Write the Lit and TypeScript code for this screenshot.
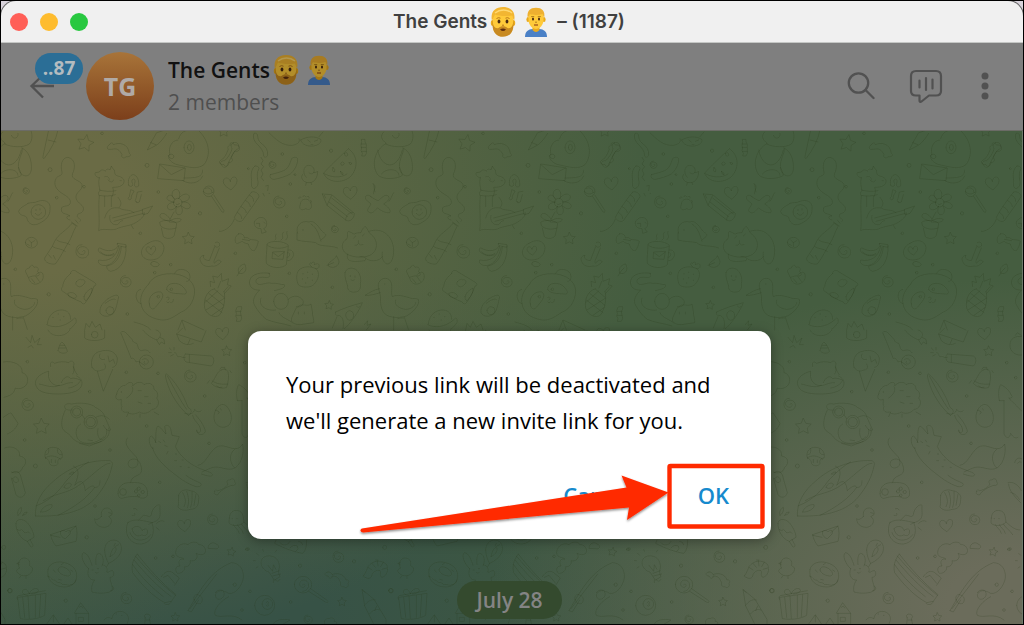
import { LitElement, html, svg, css } from "lit";
import { customElement } from "lit/decorators.js";

/* ---------- small doodles reused across the wallpaper ---------- */

const star = (x: number, y: number, r: number, turn = 0) => {
  const pts: string[] = [];
  for (let i = 0; i < 10; i++) {
    const a = (Math.PI / 5) * i - Math.PI / 2 + turn;
    const d = i % 2 ? r * 0.5 : r;
    pts.push(`${(x + d * Math.cos(a)).toFixed(1)} ${(y + d * Math.sin(a)).toFixed(1)}`);
  }
  return `M${pts.join("L")}Z`;
};

const dot = (x: number, y: number, r = 4) =>
  `M${x - r} ${y}a${r} ${r} 0 1 0 ${2 * r} 0a${r} ${r} 0 1 0 ${-2 * r} 0`;

const oval = (x: number, y: number, rx: number, ry: number, turn = 0) => {
  const a = (turn * Math.PI) / 180;
  const dx = rx * Math.cos(a);
  const dy = rx * Math.sin(a);
  return `M${x - dx} ${y - dy}A${rx} ${ry} ${turn} 1 1 ${x + dx} ${y + dy}A${rx} ${ry} ${turn} 1 1 ${x - dx} ${y - dy}`;
};

const spiral = (x: number, y: number, r: number) =>
  `M${x} ${y}c${r * 0.3} ${-r * 0.5} ${r * 0.6} ${r * 0.3} 0 ${r * 0.5}c${-r} 0 ${-r} ${-r * 1.2} 0 ${-r * 1.2}c${r * 1.2} 0 ${r * 1.2} ${r * 1.7} 0 ${r * 1.7}c${-r * 0.6} 0 ${-r} ${-r * 0.4} ${-r} ${-r}q0 ${-r} ${r * 0.9} ${-r}`;

const heart = (x: number, y: number, r: number) =>
  `M${x} ${y - r * 0.4}c${-r * 0.3} ${-r * 0.9} ${-r * 1.3} ${-r * 0.5} ${-r} ${r * 0.3}c${r * 0.2} ${r * 0.5} ${r * 0.7} ${r * 0.7} ${r * 1.1} ${r}c${r * 0.4} ${-r * 0.5} ${r * 0.9} ${-r * 0.8} ${r * 0.9} ${-r * 1.4}c0 ${-r * 0.8} ${-r * 0.9} ${-r * 0.7} ${-r} ${r * 0.1}`;

const upper: string[] = [
  // bone, ribbon, vine
  "M34 45c-6-8 10-10 12 0c14-2 20 6 10 12c-10 4-14 14-20 26c8 4 4 16-6 14c0 12-12 16-16 6c-12 2-18-8-6-14c8-4 16-20 20-32c-4-4 0-12 6-12",
  "M104 12c-8 30 30 34 30 66c2 6 10 4 12-2c2-36-30-30-30-58c0-8-10-12-12-6M108 108c-14 10-12 30-10 44c0 8-4 18 6 24c10-2 16-14 12-26c-2-14-2-24 4-34c0-6-6-8-12-8M126 82l6 10l-6 10l8 8l-8 10l6 12l-6 10l8 10",
  "M154 134c16-4 30-8 40-12c14-6 18-20 24-36c4-6 18-6 18 2c0 18-12 36-22 44c-14 8-36 14-48 16c-10 0-16-6-12-14M140 168l8-2l-2 16M132 190l4 8M150 190h2",
  // sleeping creature at the top edge
  "M150 8c20 20 40 40 70 38c18-4 24-10 20-20M245 30c20-12 44-12 60-2c4 8-6 18-22 20c-18 2-34-4-38-18M266 30l8 6M286 34l10-4M276 44h6M300 20l12-14",
  // chick
  "M262 142c-12-10-10-34 6-36c16 0 20 14 16 22c6 0 12-4 12-4c0 16-8 34-26 34c-20 0-28-18-18-26M262 158l-2 8M276 158l2 6M270 128c6 6 12 4 14 0",
  // watermelon
  "M388 56c30 20 30 60 6 84c-24 22-70 18-80-10c0-4 74-74 74-74M314 130c20 12 50 16 70 2M376 70q12-6 10 6q-8 8-10-6M366 98q6-6 10 2q-2 8-8 6ZM342 112q-4 14 4 14q6-6-4-14M364 124q2 12 8 10q4-4-8-10M390 98q8-4 8 4q-6 6-8-4",
  // wrapped candy
  "M428 28h10v8l4 6v28l-4 8h-10l2-8l-4-8l2-8l-2-8l2-10ZM426 42h14M426 52h14M428 64h14",
  // dinosaur
  "M494 6c-12 12-6 24 8 34c-36 20-46 66-26 94c14 18 64 12 74 2c-4-16-8-24-8-24M500 42c20 10 56 12 74 0c12-14 8-34 4-42M540 10c4 16-16 20-20 6M552 54c20 10 30 34 28 66c-4 24-26 22-36 4c-8-20 2-40 8-58c2-6 0-12 0-12M476 60c12 60 60 60 74 0M488 132c4-14 50-22 52 4",
  // carrot knife
  "M632 0l-16 74q-4 12 2 12q32-40 42-86M630 30l24 6",
  // arch bone, rocket
  "M816 42c-12 8-10 18 0 16c14 0 24-8 36 16c-4 8 6 14 12 6c10 2 18-4 10-10c-4-30-30-34-48-26c0-6-8-8-10-2",
  "M940 36l16-28l26-8M986 10c-8 14-20 28-28 34l-30 16l12-24M938 38l16 6",
  // dog and letter
  "M1020 30c-20 0-30 26-24 42c-10 10 0 20 8 26c10 8 30 8 40 12M1022 26c6-20 20-26 36-26M1084 4c30 30 36 70 14 100c-20 14-40 8-52 6M1038 52a14 18 0 1 0 30 0a14 18 0 1 0-30 0M1048 52a6 9 0 1 0 12 0a6 9 0 1 0-12 0M992 76q10-8 16 2q-2 12-12 6ZM966 102l76 12l-4 38l-78-6ZM966 104l34 30l40-20M1094 120c0 20-14 24-56 24M1034 152c20 12 50 10 60-14",
  // bone on the right
  "M1186 38c-10 6-6 14-4 16c0 12-16 34-22 38c-12 0-16 8-8 14c2 8 14 8 16-2c10-18 14-28 22-40c12 2 18-6 12-14c2-10-10-16-16-12",
  // paw
  "M244 222c2-14 12-16 20-14c10 2 16 18 12 26c-6 8-14 2-16 2c-10 6-18 4-18-4ZM240 206q-4-8 6-4M252 200q2-8 8 0M264 200q8-4 6 4M274 212q8 0 2 6",
  // fire cracker
  "M98 186c-12 14-40 52-52 76c4 10 16 16 24 10c14-20 38-52 50-72c0-10-14-18-22-14M92 196c8 2 12 10 12 18M80 212c8 4 14 10 14 18M66 230c8 4 16 10 16 18M56 248c8 4 12 10 12 18M46 268c-10 26-36 40-50 36M-4 298c-20-6-20-26-8-22c14 4 8 24 12 26",
  // fish, bow tie
  "M106 276c6-16 30-20 36-2c4 12-2 20-8 22l8 10l-14 4l-2-14c-16 0-22-10-20-20M112 280h10v10M134 276l4 4",
  "M58 312c-8 6-12 14-8 26c4 6 14-2 20-4c6 6 12 6 18 8c2 8 8 22 18 20c6-8 10-16 12-28c-6-6-20-4-26-6c-4-6-10-6-16-4c0-8-8-16-18-12ZM70 328l22 4",
  // pencil
  "M310 192l14 34l56 44c12 8 26-4 26-20l-68-56l-28-2ZM324 226l14-30M330 216l56 44M338 204l62 48M380 270c0-14 10-24 22-22M316 196l4 8",
  // banana peel
  "M456 200c-10-10-20-2-16 8l16 14c-8 14-16 20-4 26c12 4 16-10 24-14c10 8 24 16 36 14c6-8-8-20-18-26c14-10 20-14 14-24c-10-8-22 8-30 14c-8-2-14-6-22-12ZM466 164c8 10-6 20-2 28M462 160c6 10 2 18 6 26M524 188c-6 8-8 20-14 26",
  // fried egg
  "M570 220c-16 12-22 10-28 24c4 16 18 10 24 18c4 24 24 26 38 18c20-10 32-22 32-42c4-26-20-30-36-24c-12 6-20 2-30 6" + dot(601, 246, 22) + "M592 250c4 8 14 8 18-2M594 238v4M606 236v4",
  // whale
  "M236 310c-8-22 10-40 34-34c14-6 24 8 36 24c6 10 20 10 12 20l-12 10M234 308v22c20 6 40 4 56 8c14 14 40 6 66 16M276 282c20 12 24 36 30 52M250 300h4",
  // mug
  "M144 344c0 20-4 40-2 56c14 16 48 16 60 4l6-56M144 342c10-12 52-10 64 4c-6 12-56 12-64-2M208 360c22-4 20 32-2 32M206 368c10 0 8 14-2 14M162 366l34-2l-4 24l-32-2ZM162 368l16 12l18-14M168 330c8-8-4-10 4-18M186 330c14-8-4-14 8-24M200 330c12-12 0-14 4-26",
  // leaves
  "M76 402c-16 4-22 16-16 28c16 4 24-10 20-20ZM54 438l10-16l8-8M352 378c-4 12-28 18-24 30c14 10 34 0 32-14ZM324 406l20-8",
  // strawberry
  "M240 420c12-12 34-12 50-4c16 12 6 36-4 46c-8 12-40 12-48 2c-6-12-8-34 2-44M278 410c-12-8-4-14 0-10c4-8 12-2 8 4c8-4 16-4 14 4c2 6-4 8-10 8M252 430v2M266 426v2M280 432v2M250 446v2M266 442v2M280 450v2M260 458v2",
  // coiled snake and cat
  "M152 430c-22-4-56 0-60 22c-4 20 14 30 30 28c-12 12-26 30-14 48c8 14 20 30 34 40c20 10 52 12 74 20M150 430c6 8 2 14-14 12c-14-2-30 4-24 16c8 14 30-4 46 2c16-2 24 4 38 4c4 10-12 14-30 18M164 514a22 24 0 1 0 44 0a22 24 0 1 0-44 0M208 508c16-16 36-10 44 4c4 10-6 22-20 18M232 534l10-8c16-4 24 4 34-4l4 22c0 16 6 26 4 34l-40 6c-20 0-30-8-26-20ZM238 546v6M256 546v6M180 548c6 16 30 20 40 30M126 504c-10 26 20 40 44 36",
  // sleeping cat
  "M382 328c8-8 0-20 6-24c8 2 14 8 18 8c8-4 14-4 20-4c2-8 8-18 14-18c6 8 8 14 12 20c30 20 24 56 0 66c-20 10-62 6-76-10c-10-14-8-30 6-38M450 304c40-14 72 14 74 56c0 22-6 42-20 42c-14-6-16-22-14-36M386 372c-8 26 20 24 52 20c6-10-6-14-16-12M440 384c8 12 42 12 50-4M410 318l-6 6M430 318l6-6M408 346q8 2 10-6q6 8 14 4M418 338v-6",
  // ball, acorn
  oval(580, 338, 18, 16) + "M572 330l8 8l10-6M580 338v12M566 342l8 4",
  "M564 428c-6-10 4-12 10-14c4-10 10-12 14-2c12-4 16 6 10 12c10 10 6 14-4 14c-8-2-14 2-22 4ZM572 444c4 14 12 20 24 18c14-4 24-14 18-32c-8-8-14 0-20 4M580 446l10 12M594 440l10 14",
  // champagne bottle with splash
  "M702 280c-16 22-42 32-52 54c-8 20-22 36-30 50c-2 14 20 20 32 18c16-20 26-44 38-62c12-18 14-34 24-50ZM700 276l18 12M712 270l8 10M656 330c10 10 26 4 40 14M644 350c12 8 24 4 38 14M632 374l8 10M646 376l6 12M696 270c-16-4-10-14 0-12c-14-10-26-4-26-20c0-14 20-6 26-16c6-16-12-24-24-32c-20-12-26-30-18-44c6-12 20-6 18-20c-6-20 0-44 18-44c26 6 20 36 14 48c-8 20 24 20 28 34c2 20-20 20-18 40c4 18 26 20 22 36c-4 14-20 6-18 20c4 8 14 6 8 14",
  // alpaca playing guitar
  "M784 142c-4 18 0 28 2 40c-6 4-6 12-2 16c-4 30 2 76-2 104c14-10 40 4 60-8c22-8 40-6 60-22c14-10 20-22 18-24M784 144c-8-2-16-10-12-16l12-2c6-10 14-6 18-2c2-8 10-8 14-4l4-12l6 10c6 0 2 10 6 16c6 6 20 4 26 16c2 16-12 22-34 22c4 10 2 20-2 28M784 180c14 4 34 6 50 2M784 196c14 4 34 2 48-2M800 198v32M820 200v30M800 140c6-4 14 2 14 8M810 150c10 10 16 6 16 0M846 152h4M840 202c10 12 12 20 4 30M800 264c10-32 26-32 44-30c14 10 30 2 44 14M824 264l90-24M828 274l88-24M914 238l30-10l-14 22l-14 4ZM816 256c-4 14 4 30 20 28c10-2 6-10 18-12M880 286l6 10",
  // notes
  "M872 166c-4-18 4-32 14-32c12 2 18 18 16 34c-6 6-16 2-12-8c4-8-2-18-8-10c-2 10 6 14 0 18q-6 4-10-2M878 180l-4 20q-8 4 0 10q8 0 6-12l8-14ZM896 218q-8-6-2-12l4-20l14-2M910 194l-6 22q-8 6-10-2",
  // flower pot
  oval(1019, 218, 13, 13) + "M1010 208c-14-12-8-30 6-30c10 4 12 16 6 28c10-16 30-18 32-6c2 12-18 16-24 16c20-2 30 8 26 16c-8 10-20 0-28-6c10 16 4 30-8 28c-10-4-6-20-4-26c-10 16-28 14-28 2c2-12 16-12 22-14c-20-2-28-10-20-18c8-8 18 4 20 10M1014 222c4 4 8 2 10-2M1008 246l-12 22M996 268c-8-16-26-24-30-12c-2 8 12 14 28 18c12-10 34-12 36-4c-8 10-22 6-36 6M966 276c12-8 40-6 50 4l-2 14c-16 6-36 4-46-6ZM970 294l6 26c10 8 26 6 32-2l6-24",
  // lollipop
  oval(1112, 184, 16, 16) + "M1102 176c12-8 20 4 20 12M1098 186c10 10 20 6 28 0M1120 198l32 48q6 4 6-4l-30-46",
  // bananas
  "M840 348c-6 14-30 20-54 6c-6-2-8 10 0 14c16 12 30 10 42 6M842 348c-6 34-30 48-60 42c-4 8 4 14 12 16c20 4 44-12 52-54M850 350c-2 34-20 54-44 58c0 8 4 14 12 16c30-4 48-34 46-76M838 340l26 4v8l-20-4c-4 0-8-4-6-8M788 366c12 12 28 12 40 4",
  // thought bubble
  "M930 340c20-14 44-10 48 12c0 20-14 38-40 38c-16 0-28-10-28-24c2-12 8-20 20-26M938 402q0-8 10-8q12 2 16 10q-4 8-16 6q-10-4-10-8" + heart(939, 363, 14),
  // anchor
  "M1132 338c8-6 16 2 12 10c-4 6-14 4-14-2M1130 350l-16 42c-16-2-20-8-16-16c-12 2-14 10-10 18c4 14 20 18 34 14c12 4 24-10 28-12c-4-8-14-8-20 4c-4-4-2-8 0-12l14-34",
  // cheese cube
  "M698 430c-2-8 12-12 16-6c16 10 38 22 50 30c10 4 14 14 4 14c-6 20-16 36-26 50c-4 6-10 4-12-2c-18-6-38-18-52-30c-8-2-10-10-4-16c2-20 14-30 24-40M716 454c10-8 12-8 14-4c6-4 16 4 8 12c-6 8-14 10-16 8c-8-4-12-10-6-16M690 490c12-6 24 0 26 10c-4 8-14 4-22 0ZM738 500c4-16 18-22 24-26c2 14-8 28-18 38q-8-2-6-12",
  // avocado
  "M810 506c14-8 28-16 32-6c-4 20-8 36-12 44c-10 18-36 20-44 4c-2-20 10-30 24-42M802 520c10-8 24-16 30-12M804 542a12 12 0 1 0 24 0a12 12 0 1 0-24 0",
  // panda
  "M932 462c10-24 46-34 80-30c30 4 54 20 58 48c0 40-24 60-40 66c-20 12-36 26-60 24c-40-6-60-26-62-56c0-18 6-32 24-52M1010 430c6-20 44-14 46 8c0 12-4 16-10 16M908 478c-20 2-18 40 2 44M934 522c-6-22 16-40 34-36c18 10-6 34-16 46c-10 12-18 0-18-10M986 478c-2-22 36-24 50-6c14 14 10 22 0 20c-20-2-44 0-50-14M986 502q6-4 8 2l-4 6M986 516q4 6 8 0M998 518q8 2 8-10" + dot(961, 500, 4) + dot(1000, 478, 4),
  // pineapple
  "M1130 476c-26 6-34 36-30 58c8 24 30 30 44 22c14-20 20-50 14-72M1118 470l-2-16l14 4l-6-20l16 4l10-12l2 24l20-8l-4 18l12 4l-20 22M1140 474l8-20M1158 484l12-14M1102 510l50 38M1112 490l46 36M1130 478l28 24M1104 540l56-36M1100 518l40-36M1122 556l34-24",
  "M58 530h10v8l-4 6l4 22l-4 8h-12l2-8l-4-8l2-8l-2-8l4-10ZM52 544h14M52 556h14",
  // pizza slice
  "M350 546c20-10 50-20 80-28c-6 20-40 70-54 78M350 546q-4 10 6 10c16 0 20 20 16 40M392 542c-14 2-16 18-4 28c12 4 20-10 14-22ZM412 528q8 8 10 2M354 560l-14 34",
  // goose
  "M478 472c-4-24 20-34 34-22c12 14 2 36 8 50c14-8 34-2 60 6c8-2 12 0 18 2c6 16-16 40-36 50c-24 8-60 6-70-14c-12-22-4-40-10-56ZM482 476c-16 2-30 12-44 20c10 2 34-4 46-8M530 510c-6 14 10 26 30 28c20 0 30-14 30-20M496 462h2M524 560v40M556 562l12 36M536 566c6-2 12-2 18-2",
  // burger
  "M628 582c2-28 24-44 46-42c16 2 24 12 24 28M626 584c20 10 50 10 80-16c6-10 10 0 8 10c-8 10-12 16-20 20M644 562h2M660 552h2M676 560h2M666 570h2",
  "M740 600l4-20l10 12l8-18l10 18l14-10l6 18M888 576c20 6 40 10 50 24M1020 600l12-30l66 30M1032 572l10 28M436 584l10-12l-2 14l12-4l-14 18",
  // ghost
  "M378 428c-2 14 4 26 8 40c-2 14 10 20 22 18c14 0 18-12 16-26c4-14-2-34-14-42c-14-8-30-2-32 10M394 436v4M408 438v4M396 450q6 4 10 0",
  star(742, 40, 26, 0.2), star(14, 4, 18), star(1051, 326, 19), star(330, 526, 14, 0.1),
  heart(34, 162, 20), heart(394, 190, 20),
  spiral(161, 104, 11), spiral(182, 216, 18), spiral(348, 297, 11), spiral(565, 182, 10), spiral(734, 364, 20), spiral(864, 454, 17),
  dot(190, 72), dot(214, 162), dot(203, 259), dot(49, 370), dot(211, 430), dot(340, 472), dot(532, 418), dot(636, 119, 6),
  dot(656, 203), dot(738, 170), dot(927, 106, 6), dot(961, 186), dot(1086, 250, 5), dot(907, 310), dot(998, 404), dot(950, 428),
  dot(868, 552), dot(632, 493, 5), dot(336, 62, 5), dot(88, 116, 3), dot(228, 134, 3), dot(792, 10, 4),
];

const lower: string[] = [
  // top row: grass, camera, comet, carrot, gift box
  "M54 22l14 16l4-22l8 22l16-14l-8 20l12 0M60 52l10-6l6 8M120 0c10 22 50 24 66 0M230 2v22c10 10 46 10 60 0v-24" + dot(260, 14, 10),
  "M410 106c-16-10-18-14-26-10c-4-10-10-14-14-10c-8-20-24-60-32-78c10-12 20 6 34 20c2 8 6 10 14 12c6 10 2 18 14 22c12-4 20-2 26 6M394 96a21 21 0 1 0 42 0a21 21 0 1 0-42 0M404 88c10-6 20 2 16 10c-6 10-18 0-10-4",
  "M404 0c12 14 28 26 44 30l8-10c4-10-2-18-12-20M446 30l8 14l6-8l10 6l-2-14l-12-6M508 10l16-16M506 12l8 20c16 14 30 14 42 8M506 12l74 24l14-34M540 42l6-14",
  "M756 20c-20-4-36 6-36 24c-2 22 20 36 40 30M736 16l6-8l12 8",
  // candy corn
  "M150 62c4-16 8-24 12-26c8 6 14 18 16 28c-4 8-22 8-28-2M152 54h22M156 46h14",
  // hamster in a ring
  "M128 110c-4-14 4-18 12-10c14-6 30-6 42-2c6-8 16-6 16 4c-4 12 4 24 10 32M122 124c-20 4-40 18-40 36c4 26 30 32 70 32c40 0 70-10 70-32c0-14-10-18-16-22M122 126c-4 20 6 36 22 40c20 4 30-10 50-8M160 158c6-16 20-24 28-12c8-4 18 0 30 4c-4 12-20 22-36 24M94 162c20 4 40 14 60 4M196 110c4 8 2 16-2 22",
  // ice cream
  "M252 112c-6-20 4-46 26-48c16-6 42-4 50 20c0 20-6 26-14 28M252 112c10 14 20 12 30 8c14 0 12-16 6-20M268 124l18 60l28-66M276 72c-6 10 2 20 14 16M300 78l4 18l12-8l4 12",
  // dynamite
  "M532 72l78 6c10 4 10 22 0 30l-76-12c-8-6-8-20-2-24M544 74v22M532 82c-12 4-12-6-20-2c-8 2-2-12-12-12M490 60l-6-6M490 68h-8M498 60v-8M496 74l-8 4",
  // bell
  "M640 120c-14 4-14 20-30 40c10 12 34 18 46 12c4-16 8-30 4-46c-2-8-14-12-20-6M612 152c12 10 30 12 48 10M636 118l4-6h10l2 8M604 152l-6 8M666 122l4 6M626 168q10 8 16 4",
  // sheep
  "M326 192c2-14 14-26 26-26c12-14 26-10 22 2c10-14 30-14 34-4c12-8 30-4 30 14c12 8 14 18 8 26c12 14 2 34-14 34c-10 14-30 14-38 8c-14 8-28 8-36 0c-16 4-20-10-16-16c-4-4-2-12-2-22c-12 6-22-4-14-16M372 170c8 8-2 26-16 34M340 184v4M362 246l-6 14M438 246l14 8M396 252v10M390 182h10M410 200h10M390 216l12 4M420 220h8",
  // umbrella
  "M474 132l-2 6c8 40 30 80 60 110l10 8M476 132c24 20 50 60 64 100l8 6c4 8 0 14-6 18M478 138c20 36 40 76 58 100M530 250c16 6 28 0 30-12c6 10 18 8 20 4M554 256c4 20 20 22 24 44c0 10-12 10-12 2M562 254c10 10 28 34 30 50c-4 14-26 14-26-4",
  // goggles dog
  "M190 222c-16-4-24 4-18 14c10 8 20 2 24 4M172 240c-10 20-14 44-8 56c4 10 16 12 24 22c20 30 70 30 100 12c14-10 18-20 14-36M192 222c20-6 60-2 70 10c20 10 26 20 28 28l18 40c-6 8-16-4-22-14" + dot(206, 246, 18) + dot(206, 246, 12) + dot(248, 276, 20) + dot(248, 276, 14) + "M222 254l8 12M264 262c16-10 30-4 40 6M218 282c-12 6-18 24-10 42c10 20 50 24 80-4M214 340l30 8l36-14M240 330l14 2M270 296c-4 16 2 36 14 32c8-4 14-16 12-30",
  // egg
  "M622 242c8-20 28-26 38-8c12 16 14 40 2 52c-16 12-36 4-42-12c-4-12-2-22 2-32M624 240l10 6l-4 6M638 236l2 4",
  // mushroom
  "M112 384c-6-20 8-34 26-32c20 2 28 18 24 32c-12 2-14 8-12 16c-4 10-20 10-26 0c0-8-2-12-12-16M122 356c2 12-2 18-8 18M150 356c-6 12 4 20 12 18M112 384c12-10 30-8 46 4M130 388v10M142 390v8",
  // surfboard
  "M82 558c-2-40 20-76 54-104c36-34 100-66 170-62c8 4 8 10 6 16c-6 30-20 60-48 94c-30 36-90 60-182 56M84 528c50-20 72-50 88-72c20-24 50-50 70-60M196 408c16 8 20 20 4 58c10-12 24-16 26-4c4 4 4 12 6 20c10-10 24-20 28-10c12 2 16-8 16-20M106 512c30-20 60-20 90-36c40-20 90-80 110-76M98 546c2-12 20-24 34-22c4 12-20 24-34 22M168 472c4-12 16-16 22-10c0 10-14 18-22 10M184 432q4-8 14-6q0 8-14 6M260 472c-20 30-60 60-110 84",
  // game pad
  "M330 490c0-22 16-34 40-32c28-2 44 4 48 24c4 20-6 24-20 22c-10-8-40-4-52 0c-10 4-16-4-16-14" + dot(345, 486, 10) + dot(384, 484, 5) + dot(392, 476, 5) + dot(404, 486, 5) + dot(392, 496, 4) + "M368 458c0-28 40-14 32-46c-4-26-24-30-36-20c-8 10-2 22 10 22c18-2 20-20 10-34c-16-18-40-36-26-56",
  // leaping fox
  "M434 356c-12-10-14-36-4-38c8 4 10 14 14 20M442 338c4-14-2-40 8-50c12 6 16 18 24 24l-4-22c4-8 14-4 18 6l4 20l22 4l-12 30c14 28 40 50 66 62c24 12 44 14 46 22c-2 8-16 4-34-2M434 352c2 20 24 46 50 68c30 24 50 40 80 50c10 2 20-4 14-10c-14-8-30-12-44-24M570 406c24-4 30-36 54-54c20-12 40 4 56 4c12 0 18-4 24-14c6 30-6 66-28 74c-20 6-40-8-60-4c-10 2-20 8-34 14M680 358c-20 14-14 44 0 56M452 334l6 4M466 330l4 6M470 346l8 4M480 364l-4 8M502 372h4M500 392h6M522 390h4M516 410h4M540 412h4",
  // shell
  "M512 496c2-14 20-20 34-14c14 0 30 12 26 26c0 20-8 30-26 30c-14 6-32 2-36-8c4-12 0-20 2-34M524 488c8 14 12 28 4 42M536 484c6 16 8 34 2 50M552 484c0 16 2 30-4 48M564 492l-6 34",
  // bone
  "M620 484c-6 8 4 12 10 10c0-8 30-26 42-28c10 2 12-6 8-10c2-8-8-14-14-6c-8-2-12 6-6 12c-4 10-24 20-32 20c-4-4-10-2-8 2",
  // drops
  "M30 556c-4-10 2-20 10-24c2 10-2 20-10 24M44 556q4-12 14-10q-4 10-14 10",
  // popsicle
  "M24 580c0-14 20-16 34-2c10 12 20 30 20 44l-20 12c-20-6-36-34-34-54M28 598c10 10 10-6 18 6c8 12 12-6 20 6M58 634l10 16c6 4 10-4 4-10l-6-12",
  // love letter
  "M128 614l76-26c4 16 4 30 0 46l-60 14c-8-10-14-20-16-34M128 616l28 6M182 608l22-20M158 604c10-8 16 2 16 2c8-10 18-4 12 6l-14 14c-10-2-18-14-14-22",
  // duckling
  "M280 560c-2-16 4-26 18-26c12 2 16 12 14 20l-10 6c14 6 10 30-12 32c-20 0-30-12-30-26c8 6 14-2 20-6M302 548l8 2",
  // fish bowl
  "M360 576c-16 40 10 68 40 66c30-4 44-32 32-62M360 578c20-16 50-4 74 0M366 608c10 30 48 28 62 6M372 596c12-14 30-4 30 6c10-10 20-4 16 4c2 10-10 14-16 8c-10 8-26 4-30-18M392 570l14-14c10-2 20 10 24-2c2-20 20-34 26-28c-2 20 6 36-10 46c-12 8-20 4-24 12M376 536q8-4 12 4M372 556q12 4 8-6M446 580q12-12 22-6M444 592l10 8",
  // jellyfish
  "M664 564c0-16 12-26 26-22c16 2 16 22 18 34c-10 12-34 14-44 4c-2-4 0-10 0-16M672 566h2M686 566h2M676 584c4 10 14 12 18 26M688 584c4 10 14 12 18 26M700 582c6 12 20 18 28 32M708 576c12 10 24 24 42 24",
  // squid
  "M688 212c-4-20-2-40 4-48c14 6 28 20 32 32c8 6-4 10-8 8c20 20 30 30 40 40M688 212l14 0M702 212v100c10 20 18 8 20-2c8 14 16 16 22 12",
  // chick
  "M34 714c-8-16 4-32 16-30c14 2 18 14 14 22c6 6 10 4 10 12c-4 18-24 24-38 16c-12-8-14-14-2-20M38 738l-4 6M54 738v8M34 698l-8 2l8 4",
  // doughnut
  "M120 718c4-20 30-26 50-20c24 6 38 22 36 44c-4 24-24 32-48 28c-28-6-42-24-38-52M150 720c0-12 14-12 26-4c14 8 16 22 2 22c-14-2-26-8-28-18M118 738c10 0 12 14 22 12c8 12 18 4 24 14c10-4 20 6 24 0c10 0 16-8 16-14M136 720l6 6M160 704l6-4M188 720l6 4M152 748l8 2",
  // bunny with a balloon
  "M242 716c-16-14-26-40-16-48c14 0 22 26 26 38M264 704c-2-16 0-36 10-34c14 6 14 26 8 38M242 716c-8 20 4 36 18 34c-10 14-10 26-8 36c20 6 50 4 60-4c4-14-6-24-6-40c12 0 14-14 8-20c-8-2-12 8-18 4c4-10 0-18-12-22M252 720h4M268 716h4M262 728q6 6 10-2M308 782c12 0 12-12 4-14M290 660c0-18 12-30 28-30c20 2 26 20 20 38c-8 16-22 26-36 32c-6-10-12-24-12-40M302 700l-6 10M306 680c4-20 10-26 16-30c6 10 0 22-16 30M318 648l4-8M324 648l8-4",
  // boat
  "M388 672c-16 20-18 40-14 56c30 40 60 70 96 90l20-4l14-20c-44-36-84-80-116-122M378 690c30 36 70 80 112 110M382 678c36 44 80 86 120 118M374 704c30 44 60 70 92 96M460 740c10-16 24-20 34-12l20 16l-14 22M466 742l14-6l20 24M468 820c4 6 20 6 22-6",
  // smoke
  "M508 730c-10-12-4-22 8-22c-8-14 0-24 12-20c-6-8-16-2-24-14c-6-20 16-40 36-30c8-10 30-10 32 0c14-2 26 14 18 26c-10 8-20 2-26 0c10 14-4 26-18 22c4 12-8 20-16 18c2 12-10 20-18 20M600 654c0-14 16-20 24-12c10 4 10 10 4 14Z",
  // fishing rod
  "M540 842c40-70 70-120 130-144c24 0 38 20 36 46c-4 24-24 50-44 46c-20-12-34-10-40 4c0 20 22 16 26 2c4-20-20-20-26-8M662 800c-20 10-50 40-40 56c20 10 50-10 80 14M540 842l10 4l22-36M546 836l80-104M558 808c-4-12 8-18 16-12c10 4 12 16 4 24c-10 4-18-2-20-12",
  // gift
  "M30 802l84-12l-4 66c-20 12-50 14-72 10ZM28 808q-4-12 8-12l76-14M58 796c-16 0-20-16-8-18c8-2 12 10 14 14c2-10 18-22 26-14c6 8-10 14-20 14M44 802l6 60M60 798l4 68M82 796v66M98 794l-4 66",
  // castle
  "M116 882l20-28l20 30M136 856v20M166 884l14-20l12 18M200 848l18-30l24 32v34M200 850h42M204 850v34M214 832l6-4l4 6M212 862h14v12h-14Z",
  // spotted dog at the bottom, candle
  "M288 870c6-10 16-8 24-4c0-20 28-30 44-14c8 10 6 20 0 32M324 852h2M340 856h2M410 862q-4-6 4-10q12-2 14 8l-4 6l4 18M412 862l-2 22M414 870h12",
  // chilli and cherry on the right edge
  "M714 458c16-6 34 10 40 24M716 462c0 20 20 40 36 56M722 488c10 0 20 10 26 20M734 398c4-18 18-16 26-8M742 400q4-8 12-4",
  star(100, 290, 25), star(656, 64, 16), star(670, 666, 14, 0.2), star(502, 862, 14),
  heart(643, 12, 19), heart(529, 588, 19),
  spiral(60, 223, 18), spiral(548, 138, 18), spiral(615, 568, 16), spiral(356, 804, 17),
  dot(58, 95), dot(245, 185), dot(355, 127), dot(450, 130), dot(590, 198), dot(710, 98), dot(737, 143), dot(416, 288), dot(306, 360),
  dot(50, 330), dot(82, 408, 6), dot(455, 457), dot(603, 340), dot(261, 528), dot(236, 622, 5), dot(495, 679), dot(443, 684),
  dot(680, 764, 5), dot(173, 812, 5), dot(6, 782, 7), dot(702, 840), dot(720, 657),
  // cloud tree
  "M-14 96c30-6 60 10 56 32c20 4 24 34 4 44c-10 6-20 4-24 2c-4 20-20 24-34 28M-14 262c10-6 20-16 24-12l20 30c-8 20-20 26-32 32M-10 354c20-10 50 4 44 24c20 2 26 20 10 34c-4 16-20 20-34 14M12 428c12-8 22-4 26 10l14 50c-4 16-20 18-28 6l-14-50M14 446q8-12 16 0q4 10-6 12q-10-2-10-12",
];

const bottom: string[] = [
  // pizza, light bulb
  "M108 0l-4 10c30 16 60 26 84 30c10-8 12-24 12-40M120 8c6 10 24 10 30-4M150 24q10-12 22-6q6 8-4 16M176 4q10 0 12 10",
  "M86 96c-24-6-34-40-6-48c26-4 40 14 38 36c-4 10-2 18 2 26l-16 10ZM96 100l22-8M98 108l24-6M104 118q10 12 16 0M84 76l14 18l2-20l8 14M56 46l-6-6M70 34l-2-6M46 62h-6M106 36l4-6M54 80l-6 4M100 120v8",
  // lollipop, arch bone
  oval(189, 134, 26, 25) + "M188 134c6-6 12 4 2 8c-16 0-14-22 2-22c20 2 18 34-4 34M212 146l48 34c8 6 2 10-4 6l-50-32",
  "M264 96c-12 0-12 12 0 12c4 10 14 8 12 0c20 0 20 10 26 20c-4 10 6 14 10 12c6 6 16 0 12-10c6-6 0-12-6-10c-6-20-30-22-42-16c-2-6-8-10-12-8",
  // shrimp
  "M370 108c8-10 12-24 14-28c14-20 40-22 56-6c6 14 2 34-14 38c-10-4-2-14-6-20c-10-4-20 4-24 12c0 12-14 16-26 4M384 82l12 8M396 70l10 12M412 62l2 16M430 66l-8 14M440 84l-14 4M406 60h8",
  // pool ball
  oval(74, 196, 30, 30) + oval(82, 192, 16, 16) + "M78 188q6-8 8 0q-6 4 0 8q-4 6-8 0",
  // pencil
  "M366 148l8 50l26 52M366 148l36 30l36 60v14M374 196c8-12 20-20 32-16M388 222c10-12 22-16 32-12M368 152l8 6M410 198l-6 14",
  "M100 252c6-14 30-16 50-12l-20 12M254 252c-4-12 6-18 14-16c8-6 18 0 14 8c8 0 10 4 8 8",
  star(306, 186, 14), spiral(296, 50, 17), spiral(205, 238, 13),
  dot(20, 28), dot(180, 77, 5), dot(342, 64, 5), dot(452, 152, 6), dot(30, 154), dot(152, 186), dot(434, 22, 6),
];

const wallpaper = svg`
  <svg class="doodles" width="100%" height="100%" aria-hidden="true">
    <defs>
      <pattern id="doodle" x="218" y="-1" width="381" height="620" patternUnits="userSpaceOnUse" viewBox="0 0 1143 1860">
        <g id="doodle-set" fill="none" stroke="#1e3010" stroke-opacity="0.19" stroke-width="3" stroke-linecap="round" stroke-linejoin="round">
          ${upper.map((d) => svg`<path d=${d} />`)}
          <g transform="translate(510 600)">${lower.map((d) => svg`<path d=${d} />`)}</g>
          <g transform="translate(63 1230)">${bottom.map((d) => svg`<path d=${d} />`)}</g>
        </g>
        <use href="#doodle-set" x="-1143" />
      </pattern>
    </defs>
    <rect width="100%" height="100%" fill="url(#doodle)" />
  </svg>
`;

const beardedMan = html`
  <svg class="emoji" viewBox="0 0 26 30" role="img" aria-label="bearded man">
    <ellipse cx="2.8" cy="16" rx="2" ry="3" fill="#e9a91c" />
    <ellipse cx="23.2" cy="16" rx="2" ry="3" fill="#e9a91c" />
    <path d="M3 12C3 5 7 3 13 3s10 2 10 9v8c0 6-5 9-10 9S3 26 3 20Z" fill="#ffca3a" />
    <path d="M2.600 14C3 19 5 22 8.500 21c2.500-2.500 6.500-2.500 9 0c3.500 1 5.500-2 5.900-7C24.500 24 20 29.800 13 29.800S1.500 24 2.600 14Z" fill="#c88a22" />
    <path d="M10 22.500q3-2 6 0q-3 3-6 0Z" fill="#5f2f10" />
    <path d="M2 14C0 5 5 0 13 0c9 0 13 6 11 14l-2-5.500C17 9.500 8 9 5 7.500Z" fill="#f2b632" />
    <path d="M5 6c5-4 12-4 17 0" fill="none" stroke="#ffd871" stroke-width="1.500" />
    <ellipse cx="9" cy="14.500" rx="1.400" ry="2" fill="#4a2a12" />
    <ellipse cx="17" cy="14.500" rx="1.400" ry="2" fill="#4a2a12" />
    <path d="M6.500 11.500q2-1.500 4-.3M15.500 11.200q2-1.200 4 .3M12 18q1 .8 2 0" fill="none" stroke="#b5741c" stroke-width="1" />
  </svg>
`;

const man = html`
  <svg class="emoji" viewBox="0 0 26 30" role="img" aria-label="man">
    <path d="M2 30c0-6 3.500-7.500 7.500-8h7c4 .5 7.500 2 7.500 8Z" fill="#4a80c6" />
    <path d="M9.500 19h7v4q-3.500 4-7 0Z" fill="#e9a91c" />
    <ellipse cx="5" cy="12.500" rx="1.600" ry="2.500" fill="#e9a91c" />
    <ellipse cx="21" cy="12.500" rx="1.600" ry="2.500" fill="#e9a91c" />
    <path d="M5.500 9C5.500 4 9 2.500 13 2.500S20.500 4 20.500 9v4c0 5-4 9-7.500 9s-7.500-4-7.500-9Z" fill="#ffca3a" />
    <path d="M4.800 11C3.500 4 7 .8 13 .8S22.500 4 21.200 11L19.500 7C15 8.500 9 8 7 7Z" fill="#eeb030" />
    <ellipse cx="10" cy="12" rx="1" ry="1.500" fill="#4a2a12" />
    <ellipse cx="16" cy="12" rx="1" ry="1.500" fill="#4a2a12" />
    <path d="M8.200 9.600h3M14.800 9.600h3M12 15.200h2" stroke="#a8741a" stroke-width=".9" fill="none" />
    <path d="M11 18h4" stroke="#9a4a1a" stroke-width="1.200" />
  </svg>
`;

@customElement("app-root")
export class AppRoot extends LitElement {
  static styles = css`
    :host {
      display: flex;
      flex-direction: column;
      box-sizing: border-box;
      height: 100vh;
      overflow: hidden;
      border: 1px solid #000;
      background: #d9d4dc;
      font-family: "Open Sans", "Noto Sans", sans-serif;
    }
    * { box-sizing: border-box; }
    button {
      border: 0;
      padding: 0;
      background: none;
      font: inherit;
      color: inherit;
      cursor: pointer;
    }
    svg { display: block; }

    .titlebar {
      display: grid;
      grid-template-columns: 1fr auto 1fr;
      align-items: center;
      flex: none;
      height: 42px;
      padding: 0 15px 0 9px;
      border-bottom: 1px solid #c4c6c4;
      border-radius: 15px 15px 0 0;
      box-shadow: 0 0 0 1px #666;
      background: #f0f0f0;
    }
    .lights { display: flex; gap: 12px; }
    .light { width: 18px; height: 18px; border-radius: 50%; }
    .close { background: #ff5f57; }
    .minimise { background: #febc2e; }
    .expand { background: #28c840; }
    .title {
      display: flex;
      align-items: center;
      margin: 0;
      font: 600 19px/24px Inter, sans-serif;
      color: #404040;
    }
    .emoji { width: 26px; height: 30px; flex: none; }
    .title .emoji, .name .emoji { margin-left: 3px; }
    .title .emoji + .emoji, .name .emoji + .emoji { margin-left: 7px; }
    .count { margin-left: 8px; }

    .header {
      display: flex;
      align-items: center;
      flex: none;
      height: 88px;
      padding: 0 30px 1px 28px;
      border-bottom: 1px solid #6b6b66;
      background: #7f7f7f;
      color: #515151;
    }
    .back { position: relative; width: 28px; height: 28px; }
    .badge {
      position: absolute;
      left: 6px;
      bottom: 16px;
      min-width: 48px;
      height: 31px;
      border-radius: 16px;
      background: #2b6e96;
      font-size: 19px;
      font-weight: 700;
      line-height: 31px;
      text-align: center;
      color: #b4bcc0;
    }
    .avatar {
      display: grid;
      place-items: center;
      width: 68px;
      height: 68px;
      margin-left: 29px;
      border-radius: 50%;
      background: linear-gradient(#a87439, #7c3f1b);
      font-size: 25px;
      font-weight: 700;
      color: #b0aaa6;
    }
    .who { flex: 1; min-width: 0; margin-left: 14px; }
    .name {
      display: flex;
      align-items: center;
      margin: 0;
      font-size: 21px;
      font-weight: 600;
      line-height: 32px;
      color: #111;
    }
    .name .emoji { filter: brightness(0.7); }
    .members { margin: 0; font-size: 21px; line-height: 32px; color: #4f4f4f; }
    .actions { display: flex; align-items: center; gap: 34px; }

    .chat {
      position: relative;
      flex: 1;
      min-height: 0;
      display: flex;
      flex-direction: column;
      justify-content: flex-end;
      align-items: center;
      padding-bottom: 5px;
      border-right: 1px solid #6d7a6b;
      background:
        radial-gradient(ellipse 60% 92% at 3% 14%, #6a6b45 16%, rgba(106, 107, 69, 0) 100%),
        radial-gradient(ellipse 52% 66% at 100% 96%, #6b6c5b 14%, rgba(107, 108, 91, 0) 100%),
        radial-gradient(ellipse 55% 75% at 24% 100%, #375246 14%, rgba(55, 82, 70, 0) 100%),
        #455d40;
    }
    .doodles { position: absolute; inset: 0; }
    .date {
      position: relative;
      margin: 0 4px 0 0;
      padding: 0 19px;
      border-radius: 19px;
      background: #344a2e;
      font-size: 21px;
      font-weight: 600;
      line-height: 38px;
      color: #848484;
    }

    .dialog {
      position: absolute;
      top: 200px;
      left: 0;
      right: 4px;
      width: 523px;
      max-width: 90%;
      margin: 0 auto;
      padding: 35px 16px 14px 38px;
      border: 0;
      border-radius: 13px;
      background: #fff;
      box-shadow: 0 2px 12px rgba(0, 0, 0, 0.35);
      color: #000;
    }
    .message { margin: 0 22px 27px 0; font-size: 22px; line-height: 36px; }
    .buttons { display: flex; justify-content: flex-end; gap: 12px; }
    .action {
      height: 60px;
      padding: 0 26px;
      font-size: 22px;
      font-weight: 600;
      line-height: 60px;
      color: #168acd;
    }
    .marks { position: absolute; right: 0; bottom: 0; pointer-events: none; }
  `;

  render() {
    return html`
      <header class="titlebar">
        <div class="lights">
          <button class="light close" aria-label="Close"></button>
          <button class="light minimise" aria-label="Minimise"></button>
          <button class="light expand" aria-label="Zoom"></button>
        </div>
        <h1 class="title">The Gents${beardedMan}${man}<span class="count">– (1187)</span></h1>
      </header>

      <section class="header">
        <button class="back" aria-label="Back, 1187 unread">
          <svg width="28" height="28" viewBox="0 0 28 28" fill="none" stroke="#515151" stroke-width="2.300">
            <path d="M25 14H3M14 3L2.500 14L14 25.500" />
          </svg>
          <span class="badge">..87</span>
        </button>
        <div class="avatar">TG</div>
        <div class="who">
          <h2 class="name">The Gents${beardedMan}${man}</h2>
          <p class="members">2 members</p>
        </div>
        <div class="actions">
          <button aria-label="Search">
            <svg width="28" height="28" viewBox="0 0 28 28" fill="none" stroke="currentColor" stroke-width="2.300" stroke-linecap="round">
              <circle cx="11.500" cy="11" r="9.700" />
              <path d="M18.500 18L26.500 26" />
            </svg>
          </button>
          <button aria-label="Voice chat">
            <svg width="34" height="34" viewBox="0 0 34 34" fill="none" stroke="currentColor" stroke-width="2.200" stroke-linecap="round" stroke-linejoin="round">
              <path d="M7 2H27Q32 2 32 7V22Q32 26.500 27 26.500H20L12.500 32.500Q10.500 33.500 10.500 31.500V26.500H7Q2 26.500 2 22V7Q2 2 7 2Z" />
              <path d="M10.500 11.500v7M17 9v12M23.500 10.500v9" />
            </svg>
          </button>
          <button aria-label="Menu">
            <svg width="16" height="28" viewBox="0 0 16 28" fill="currentColor">
              <circle cx="8" cy="4" r="3.500" /><circle cx="8" cy="14" r="3.500" /><circle cx="8" cy="24" r="3.500" />
            </svg>
          </button>
        </div>
      </section>

      <main class="chat">
        ${wallpaper}
        <p class="date">July 28</p>
        <section class="dialog" role="dialog" aria-modal="true" aria-labelledby="dialog-text">
          <p class="message" id="dialog-text">Your previous link will be deactivated and we'll generate a new invite link for you.</p>
          <div class="buttons">
            <button class="action">Cancel</button>
            <button class="action">OK</button>
          </div>
          <svg class="marks" width="420" height="90" viewBox="0 0 420 90" aria-hidden="true">
            <defs>
              <filter id="lift" x="-5%" y="-20%" width="110%" height="150%">
                <feDropShadow dx="0" dy="1.500" stdDeviation="1.200" flood-color="#000" flood-opacity="0.45" />
              </filter>
            </defs>
            <path filter="url(#lift)" fill="#ff2a00" d="M11 79.500L275.500 38.500L270.500 26.500L317.500 43.500L276 71L278 58.500L12 83.500Q9 83 9.500 81Q10 79.700 11 79.500Z" />
            <rect x="318.500" y="17" width="93" height="60.500" rx="1" fill="none" stroke="#ff2a00" stroke-width="4.400" />
          </svg>
        </section>
      </main>
    `;
  }
}
